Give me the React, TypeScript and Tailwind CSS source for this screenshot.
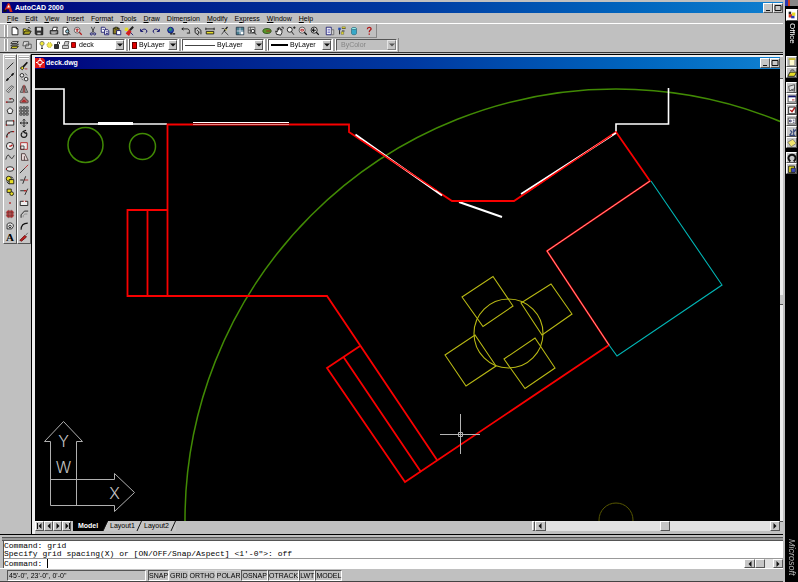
import { useState, type ReactNode } from "react";

type IconProps = { children: ReactNode };

function Icon({ children }: IconProps) {
  return (
    <svg viewBox="0 0 12 12" className="h-[10px] w-[10px] shrink-0" fill="none" stroke="#111" strokeWidth="1" aria-hidden="true">
      {children}
    </svg>
  );
}

type Tool = { name: string; icon: ReactNode };

const NAVY = "#10106a";
const RED = "#b01818";
const YELLOW = "#e6dc28";

const standardGroups: Tool[][] = [
  [
    { name: "New", icon: <path d="M2.5 1.5h5l2 2v7h-7zM7.5 1.5v2h2" fill="#fff" /> },
    {
      name: "Open",
      icon: (
        <>
          <path d="M1.5 10V3.5h3l1 1h3V6" fill={YELLOW} />
          <path d="M1.5 10l2-4h7.5l-2 4z" fill="#a8a020" />
          <path d="M7 2.5c1-1 2-1 3 .5" />
        </>
      ),
    },
    {
      name: "Save",
      icon: (
        <>
          <path d="M1.5 1.5h9v9h-8l-1-1z" fill="#333" />
          <path d="M3.5 2h5v3.5h-5z" fill="#ddd" stroke="none" />
          <path d="M4 8h4v2H4z" fill="#ccc" stroke="none" />
        </>
      ),
    },
  ],
  [
    {
      name: "Print",
      icon: (
        <>
          <path d="M4 5l1-3.5h5L9 5" fill="#fff" />
          <path d="M1.5 5.5h9v4h-9z" fill="#888" />
          <path d="M3 8.5h5" stroke="#eee" />
        </>
      ),
    },
    {
      name: "Print Preview",
      icon: (
        <>
          <path d="M2.5 1.5h4l2 2v7h-6z" fill="#fff" />
          <circle cx="7.5" cy="6.5" r="2" fill="#9cd" />
          <path d="M9 8l2 2.5" />
        </>
      ),
    },
    {
      name: "Find and Replace",
      icon: (
        <>
          <circle cx="5" cy="5" r="3.5" fill="#eee" stroke="#555" />
          <path d="M3 4h4M5 3v4M3.5 6h3" stroke={RED} />
          <path d="M7.5 7.5l3 3" stroke={RED} strokeWidth="1.5" />
        </>
      ),
    },
  ],
  [
    {
      name: "Cut",
      icon: (
        <>
          <path d="M4 1l3 7M8 1L5 8" stroke="#333" />
          <circle cx="4" cy="9.5" r="1.3" stroke={NAVY} />
          <circle cx="8" cy="9.5" r="1.3" stroke={NAVY} />
        </>
      ),
    },
    {
      name: "Copy",
      icon: (
        <>
          <path d="M1.5 1.5h4l1 1v5h-5z" fill="#fff" stroke={NAVY} />
          <path d="M5.5 4.5h4l1 1v5h-5z" fill="#fff" stroke={NAVY} />
          <path d="M7 7h2.5M7 9h2.5M3 4h2" stroke={NAVY} />
        </>
      ),
    },
    {
      name: "Paste",
      icon: (
        <>
          <path d="M1.5 2.5h7v7h-7z" fill="#8a7a20" />
          <path d="M3.5 1.5h3v2h-3z" fill={YELLOW} />
          <path d="M5.5 5.5h5v5h-5z" fill="#fff" stroke={NAVY} />
        </>
      ),
    },
    {
      name: "Match Properties",
      icon: (
        <>
          <path d="M11 1L7 5" stroke="#222" strokeWidth="2.5" />
          <path d="M6 4l3 3-3 5-4-3z" fill="#d22020" stroke="none" />
          <path d="M1 2h4v4H1z" fill={YELLOW} stroke="none" />
          <path d="M8 8l3 3" stroke={NAVY} />
        </>
      ),
    },
  ],
  [
    { name: "Undo", icon: <path d="M2 3.5v3h3M2.5 6c2-3 6-3 7 0 0 1-.5 2-1.5 2.500" stroke={NAVY} strokeWidth="1.2" /> },
    { name: "Redo", icon: <path d="M10 3.5v3H7M9.5 6c-2-3-6-3-7 0 0 1 .5 2 1.500 2.500" stroke={NAVY} strokeWidth="1.2" /> },
  ],
  [
    {
      name: "Insert Hyperlink",
      icon: (
        <>
          <circle cx="5.5" cy="5" r="3.5" fill="#2050b0" stroke={NAVY} />
          <path d="M3 4l3-2 1 3-3 1z" fill="#2a9a50" stroke="none" />
          <path d="M5 9.5h2.5M8 9.5h3" strokeWidth="1.5" />
        </>
      ),
    },
  ],
  [
    { name: "Tracking", icon: <path d="M1 3.5h7M3 2L1 3.5 3 5M8 3.5c3 1 2 3 2 4.500M7 8.5h4" /> },
    {
      name: "UCS",
      icon: (
        <>
          <path d="M2.500 2v6l4 3M2.500 4l3-2 4 3v5M5 5l2 2-1 3" />
          <path d="M7 8h4" stroke="#777" />
        </>
      ),
    },
    {
      name: "Distance",
      icon: (
        <>
          <path d="M1.5 6.5h9v3h-9z" fill={YELLOW} />
          <path d="M1 3.5h10M1 2v3M11 2v3" />
        </>
      ),
    },
  ],
  [
    {
      name: "Redraw All",
      icon: (
        <>
          <path d="M9 1L5 6" strokeWidth="1.5" />
          <path d="M2 3h3M5 6l5 5M2 10l3-4" stroke="#333" />
          <path d="M6 4l2 1" stroke={YELLOW} />
        </>
      ),
    },
  ],
  [
    {
      name: "Aerial View",
      icon: (
        <>
          <path d="M1.5 1.5h9v9h-9z" fill="#4a8090" stroke="#234" />
          <path d="M2 6h8M6 2v8" stroke="#dde" />
          <path d="M7 7h3v3H7z" fill="#fff" stroke="none" />
        </>
      ),
    },
    {
      name: "Named Views",
      icon: (
        <>
          <path d="M1.5 1.5h8v7h-8zM4 1.5v7M1.5 5h8" fill="#ddd" stroke="#444" />
          <circle cx="7" cy="6" r="2" fill="#fff" />
          <path d="M8.5 7.5L11 10.5" />
        </>
      ),
    },
  ],
  [
    {
      name: "3D Orbit",
      icon: (
        <>
          <ellipse cx="6" cy="6" rx="5" ry="3" fill="#58962a" stroke="#2b4a18" />
          <path d="M5 6h5" stroke={RED} />
        </>
      ),
    },
    { name: "Pan", icon: <path d="M3 10L2 6l2 1V3l1.500-1v3l1-3 1.500 1v2l1.500-1v4l-1.500 3zM9 1.5h2v2" fill="#eee" /> },
    {
      name: "Zoom Realtime",
      icon: (
        <>
          <circle cx="4.5" cy="4.5" r="3" fill="#eee" />
          <path d="M6.5 6.5l3 4M8.5 2h3M10 .5v3" />
        </>
      ),
    },
    {
      name: "Zoom Window",
      icon: (
        <>
          <circle cx="5" cy="5" r="3.7" fill="#eee" stroke="#444" />
          <path d="M3.5 4h3v2h-3z" stroke={RED} />
          <path d="M7.5 7.5l3 3" strokeWidth="1.5" />
        </>
      ),
    },
    {
      name: "Zoom Previous",
      icon: (
        <>
          <circle cx="5" cy="5" r="3.7" fill="#ddd" />
          <path d="M3 5h4M5 3L3 5l2 2M7.5 7.5l3 3" strokeWidth="1.3" />
        </>
      ),
    },
  ],
  [
    {
      name: "DesignCenter",
      icon: (
        <>
          <path d="M1.5 1.5h6v9h-6z" fill="#fff" stroke={NAVY} />
          <path d="M3 4h3M3 6h3M3 8h3" stroke="#55b" />
          <path d="M8 4.5h2.5v6H8z" fill="#ddd" stroke="#666" />
        </>
      ),
    },
    {
      name: "Properties",
      icon: (
        <>
          <path d="M1.5 2h3v3h-3z" fill="#2850b0" stroke="none" />
          <path d="M3 5v5M6 3h4M6 6h3" />
          <path d="M6 1h4v2H6zM5 7h3v3H5z" fill={YELLOW} stroke="#444" strokeWidth=".5" />
        </>
      ),
    },
    {
      name: "dbConnect",
      icon: (
        <>
          <path d="M3 3v6c0 2 6 2 6 0V3" fill="#38a8c8" stroke="#38788a" />
          <ellipse cx="6" cy="3" rx="3" ry="1.300" fill="#9ee" stroke="#38788a" />
        </>
      ),
    },
  ],
  [
    {
      name: "Help",
      icon: (
        <>
          <path d="M4 4c0-3 4.500-3 4.500-.5C8.5 5 6.300 5 6.300 7.500" stroke={RED} strokeWidth="1.6" />
          <path d="M5.5 9h1.600v1.600H5.500z" fill={RED} stroke="none" />
        </>
      ),
    },
  ],
];

const drawTools: Tool[] = [
  { name: "Line", icon: <path d="M2 10l8-8" /> },
  {
    name: "Construction Line",
    icon: (
      <>
        <path d="M1 11L11 1" />
        <path d="M2 10l2-2M8 4l2-2" strokeWidth="2" />
      </>
    ),
  },
  { name: "Multiline", icon: <path d="M1.5 8l6-6 3 1.500-6 7zM3 9.5l6-7" fill="#ddd" stroke="#555" /> },
  {
    name: "Polyline",
    icon: (
      <>
        <path d="M1.500 8.500h7c2.500 0 2.500-4 0-4H6" />
        <path d="M5 4.500h2M1 8.500h2" stroke={RED} strokeWidth="1.5" />
      </>
    ),
  },
  { name: "Polygon", icon: <path d="M6 2l3.500 3-1.500 4H4L2.500 5z" fill="#eee" /> },
  {
    name: "Rectangle",
    icon: (
      <>
        <path d="M1.500 3.500h9v5h-9z" fill="#eee" />
        <path d="M1 8.500h1.500M9.500 3.500h1.500" stroke={RED} strokeWidth="1.5" />
      </>
    ),
  },
  {
    name: "Arc",
    icon: (
      <>
        <path d="M2 10c0-4 3-7 8-7" strokeWidth="1.3" />
        <path d="M1.500 9.500h1.500M4 5h1.500M9 3h2" stroke={RED} strokeWidth="1.5" />
      </>
    ),
  },
  {
    name: "Circle",
    icon: (
      <>
        <circle cx="6" cy="6" r="4.3" fill="#eee" />
        <path d="M5 6h2l2-1.500" stroke={RED} strokeWidth="1.5" />
      </>
    ),
  },
  { name: "Spline", icon: <path d="M1 9c2-8 4-5 5-3s3 3 5-2" /> },
  {
    name: "Ellipse",
    icon: (
      <>
        <ellipse cx="6" cy="6" rx="4.500" ry="2.700" fill="#eee" />
        <path d="M1 6h1.500M9.500 6H11" stroke={RED} strokeWidth="1.5" />
      </>
    ),
  },
  {
    name: "Insert Block",
    icon: (
      <>
        <circle cx="4.500" cy="4.500" r="3" fill={YELLOW} />
        <path d="M5 5.500h5.500v5H5z" fill={YELLOW} />
        <path d="M2 8l3 3M7 2l3 2" />
      </>
    ),
  },
  {
    name: "Make Block",
    icon: (
      <>
        <path d="M2.500 2.500h5v4h-5z" fill={YELLOW} />
        <circle cx="8" cy="8" r="2.200" fill={YELLOW} />
      </>
    ),
  },
  { name: "Point", icon: <path d="M5 5h2v2H5z" fill={RED} stroke="none" /> },
  {
    name: "Hatch",
    icon: (
      <>
        <path d="M2.500 2.500h7v7h-7z" fill="#c86060" stroke={RED} />
        <path d="M1 4.500h10M1 7.500h10M4.500 1v10M7.500 1v10" stroke="#622" strokeWidth=".7" />
      </>
    ),
  },
  {
    name: "Region",
    icon: (
      <>
        <path d="M2.500 9.500V4l2-1.500c3-1 6 1 5.500 4l-2 3z" fill="#eee" />
        <circle cx="6" cy="6.500" r="1.500" />
      </>
    ),
  },
];

const modifyTools: Tool[] = [
  {
    name: "Erase",
    icon: (
      <>
        <path d="M10 1.500L5 7" strokeWidth="2" />
        <path d="M1.500 8.500l2.500-2 2 2-2 2z" fill={YELLOW} />
        <path d="M7 9.500h3" stroke={RED} />
      </>
    ),
  },
  {
    name: "Copy Object",
    icon: (
      <>
        <circle cx="3.500" cy="4" r="2.200" fill="#eee" />
        <circle cx="8.500" cy="8.500" r="2.200" fill="#eee" />
        <path d="M7 1.500l3 2.500M3 8l2 2" stroke="#555" />
      </>
    ),
  },
  {
    name: "Mirror",
    icon: (
      <>
        <path d="M5 2v8H1.500zM7 2v8h3.500z" fill="#aaa" stroke="#444" />
        <path d="M6 1v10" stroke={RED} />
      </>
    ),
  },
  {
    name: "Offset",
    icon: (
      <>
        <path d="M1.500 9.500c-1-3 2-4 2.500-4 0-4 4-4 4.500 0 3 0 3 3 2 4z" fill="#b07070" stroke="#444" />
        <path d="M4 8c0-2 4-2 4 0z" stroke={RED} />
      </>
    ),
  },
  {
    name: "Array",
    icon: <path d="M1 1h2.500v2.500H1zM4.800 1h2.500v2.500H4.800zM8.500 1H11v2.500H8.500zM1 4.800h2.500v2.500H1zM4.800 4.800h2.500v2.500H4.800zM8.500 4.800H11v2.500H8.500zM1 8.500h2.500V11H1zM4.800 8.500h2.500V11H4.800zM8.500 8.500H11V11H8.500z" strokeWidth=".8" />,
  },
  { name: "Move", icon: <path d="M6 1.500v9M1.500 6h9M4.500 3L6 1.500 7.500 3M4.500 9L6 10.500 7.500 9M3 4.500L1.500 6 3 7.500M9 4.500L10.500 6 9 7.500" /> },
  { name: "Rotate", icon: <path d="M4 4c-3 3-1 6 2 6s5-4 2-6M8.500 1.500L5 3l3 2.500" strokeWidth="1.4" /> },
  {
    name: "Scale",
    icon: (
      <>
        <path d="M2 2h8v8H2z" fill="#eee" stroke={RED} />
        <path d="M2 6h4v4H2z" stroke="#333" />
      </>
    ),
  },
  { name: "Stretch", icon: <path d="M3 2h4l4 8H3zM6.500 5v5" fill="#e8dada" stroke="#433" /> },
  {
    name: "Lengthen",
    icon: (
      <>
        <path d="M1 11l6-6" />
        <path d="M7 5l4-4" stroke={RED} />
      </>
    ),
  },
  {
    name: "Trim",
    icon: (
      <>
        <path d="M1.500 6h4M8 1.500L4.500 10.500" />
        <path d="M6.500 6h4.500" stroke={RED} />
      </>
    ),
  },
  {
    name: "Extend",
    icon: (
      <>
        <path d="M1.500 4.500h5M10.500 2L7 9.500" />
        <path d="M6 4.500h3" stroke={RED} strokeWidth="1.5" />
      </>
    ),
  },
  {
    name: "Break",
    icon: (
      <>
        <path d="M5 4H1.500v5h9V4H8" fill="#eee" />
        <path d="M4.500 4h1M7.500 4h1" stroke={RED} strokeWidth="1.5" />
      </>
    ),
  },
  {
    name: "Chamfer",
    icon: (
      <>
        <path d="M2.500 10.500V7l4-4.500h4.500" />
        <path d="M5 10V8l2-2h3" stroke="#888" />
      </>
    ),
  },
  { name: "Fillet", icon: <path d="M2.500 10.500C2.500 5 5 2.500 10.500 2.500" strokeWidth="1.3" /> },
  {
    name: "Explode",
    icon: (
      <>
        <path d="M1 10l6-6 2 2-6 5z" fill="#c02020" stroke="#611" />
        <path d="M8 4l2.500-3" stroke="#555" />
      </>
    ),
  },
];

const officeGroups: Tool[][] = [
  [
    {
      name: "New Office Document",
      icon: (
        <>
          <path d="M2.500 2.500h7v8h-7z" fill="#fffbd0" stroke="#777" />
          <path d="M2 2.500h8" stroke="#c8b820" strokeWidth="2" />
        </>
      ),
    },
    {
      name: "Open Office Document",
      icon: (
        <>
          <path d="M1 10L3.500 5h8L9 10z" fill={YELLOW} />
          <path d="M4 3.500c2-2 4-1 5 0" />
        </>
      ),
    },
  ],
  [
    { name: "New Message", icon: <path d="M2 4l7-2v5L3 9.500zM5 8l4 2V5" fill="#ddd" stroke="#444" /> },
    {
      name: "New Appointment",
      icon: (
        <>
          <path d="M1.500 2.500h9v7h-9z" fill="#fff" stroke="#555" />
          <path d="M1.500 3h9" stroke={NAVY} strokeWidth="2" />
          <path d="M6 6h3v2H6z" fill="#d08080" stroke="none" />
        </>
      ),
    },
    {
      name: "New Task",
      icon: (
        <>
          <path d="M2 2.500h8v8H2z" fill="#fff" />
          <path d="M4 6l2 2 3.500-5" stroke={RED} strokeWidth="1.6" />
        </>
      ),
    },
    {
      name: "New Contact",
      icon: (
        <>
          <path d="M1.500 2.500h9v7h-9z" fill="#fff" stroke="#444" />
          <path d="M3 5h2v2H3zM7 5h2M7 7.500h2" stroke="#225" />
        </>
      ),
    },
    { name: "New Journal Entry", icon: <path d="M3 10l3-4-2-2M8 2v8M8 6l3-3M3 10h7" stroke="#347" strokeWidth="1.3" /> },
    { name: "New Note", icon: <path d="M1 5l6-3.500 4 5L5 10.500z" fill="#f2e670" stroke="#776" /> },
  ],
  [
    { name: "Find Fast", icon: <path d="M4 10C0 7 2 2 6 2s6 5 2 8" strokeWidth="2.4" /> },
    {
      name: "Binder",
      icon: (
        <>
          <path d="M2 2.500h7v8H2z" fill={YELLOW} />
          <path d="M5 5h5v5H5z" fill="#3a4ac0" stroke="#222" />
        </>
      ),
    },
  ],
];

// label and index of its mnemonic letter
const menus: [string, number][] = [
  ["File", 0],
  ["Edit", 0],
  ["View", 0],
  ["Insert", 0],
  ["Format", 1],
  ["Tools", 0],
  ["Draw", 0],
  ["Dimension", 4],
  ["Modify", 0],
  ["Express", 1],
  ["Window", 0],
  ["Help", 0],
];

const raised = "border border-t-white border-l-white border-r-[#555] border-b-[#555] bg-[#c6c6c6]";
const sunken = "border border-t-[#555] border-l-[#555] border-r-white border-b-white";
const flat = "border border-[#d2d2d2]";

function ToolButton({ tool }: { tool: Tool }) {
  return (
    <button title={tool.name} aria-label={tool.name} className="flex h-3 w-3 items-center justify-center">
      <Icon>{tool.icon}</Icon>
    </button>
  );
}

function Handle() {
  return <span className="h-3 w-1 shrink-0 border-x border-white bg-[#a0a0a0]" />;
}

function WindowButton({ label, children }: { label: string; children: ReactNode }) {
  return (
    <button aria-label={label} className={`flex h-[10px] w-[10px] items-center justify-center ${raised}`}>
      <svg viewBox="0 0 8 8" className="h-2 w-2 shrink-0" fill="none" stroke="#111">
        {children}
      </svg>
    </button>
  );
}

function Arrow({ dir, bar }: { dir: "left" | "right" | "down"; bar?: boolean }) {
  const d = { left: "M5.500 1v6l-3-3z", right: "M2.500 1v6l3-3z", down: "M1 2.500h6l-3 3z" }[dir];
  return (
    <svg viewBox="0 0 8 8" className="h-2 w-2 shrink-0" aria-hidden="true">
      <path d={d} fill="#111" />
      {bar && <path d={dir === "left" ? "M1 1h1v6H1z" : "M6 1h1v6H6z"} fill="#111" />}
    </svg>
  );
}

type ComboProps = {
  label: string;
  options: string[];
  className: string;
  disabled?: boolean;
  children?: ReactNode;
};

function Combo({ label, options, className, disabled, children }: ComboProps) {
  return (
    <div className={`flex h-3 items-center pl-[2px] ${sunken} ${disabled ? "bg-[#c0c0c0] text-[#858585]" : "bg-white"} ${className}`}>
      {children}
      <div className="relative flex min-w-0 flex-1 items-center self-stretch">
        <select
          aria-label={label}
          disabled={disabled}
          className="h-full w-full appearance-none bg-transparent pl-[2px] leading-[10px] outline-none disabled:opacity-100"
        >
          {options.map((o) => (
            <option key={o}>{o}</option>
          ))}
        </select>
        <span className={`pointer-events-none absolute right-0 flex h-[10px] w-[9px] items-center justify-center ${raised} ${disabled ? "opacity-60" : ""}`}>
          <Arrow dir="down" />
        </span>
      </div>
    </div>
  );
}

function Drawing() {
  return (
    <svg
      viewBox="35 69 745 452"
      preserveAspectRatio="xMinYMin slice"
      className="block min-h-0 w-full flex-1 bg-black"
      fill="none"
      role="img"
      aria-label="deck.dwg"
    >
      {/* trees */}
      <g stroke="#418a04" strokeWidth="1.5">
        <circle cx="616" cy="520" r="431" />
        <circle cx="85.500" cy="145" r="17.500" />
        <circle cx="142.500" cy="146.500" r="13" />
      </g>
      <circle cx="616" cy="520" r="17" stroke="#565600" />

      {/* house walls and windows */}
      <g stroke="#fff" strokeWidth="2">
        <path d="M35 89H64V124H133" strokeWidth="1.6" />
        <path d="M133 124H167" stroke="#b8b8b8" />
        <path d="M98 123.500H133" strokeWidth="3" />
        <path d="M616 132V124H668.500V88" strokeWidth="1.6" />
        <path d="M459 202L502 217" />
      </g>

      {/* deck outline */}
      <g stroke="#f80000" strokeWidth="1.8">
        <path d="M167.500 296V124.500H349V132L452 201H514L616 132L650 181L547 251L609 345L405 482L327 368L360 346" />
        <path d="M167 210H127.500V296H327L437 460" />
        <path d="M147.500 210V296M343.500 357L421 472" />
      </g>
      <path d="M193 122.500H289" stroke="#fff" />
      <path d="M193 124.500H289" stroke="#f08080" />
      <path d="M355.500 134.500L442 195.500M521 194L616 133" stroke="#fff" strokeWidth="1.6" />
      <path d="M361 140L436 190M526 193L612 135" stroke="#f80000" strokeWidth="1.2" />

      {/* hot tub */}
      <path d="M650 181L547 251L609 345" stroke="#ffb4b4" strokeWidth=".8" />
      <path d="M651 181L722 285L617 356L609 345" stroke="#00b4b4" strokeWidth="1.1" />

      {/* table and chairs */}
      <g stroke="#b8b814" strokeWidth="1.1">
        <circle cx="508.500" cy="333.500" r="34.500" />
        <path d="M462 297L493 276.500L513 306L483 326.500Z" />
        <path d="M521 303L551 284L572 314L542 335Z" />
        <path d="M445 355L475 335L496 366L466 386Z" />
        <path d="M504 359L535 338L555 368L525 388.500Z" />
      </g>

      {/* ucs marker */}
      <g stroke="#b0b0b0">
        <path d="M50.500 505.500V441.500H44.500L63.500 421.500L82.500 441.500H76.500V505.500" />
        <path d="M50.500 479.500H114.500V473.500L134.500 492.500L114.500 511.500V505.500H50.500" />
      </g>
      <g fill="#c4c4c4" textAnchor="middle" className="font-['Inter',sans-serif] text-[16px] font-light">
        <text x="63.500" y="447">Y</text>
        <text x="63.500" y="473">W</text>
        <text x="114.500" y="499">X</text>
      </g>

      {/* cursor */}
      <path d="M440 434.500H480M460.500 414V454" stroke="#b4b4b4" />
      <path d="M458.500 432.500h4v4h-4z" stroke="#b4b4b4" />
    </svg>
  );
}

function LayoutTabs() {
  const [tab, setTab] = useState("Model");

  return (
    <div className="flex h-[10px] items-stretch bg-[#c0c0c0]">
      <div className="flex">
        <button aria-label="First layout" className={`flex w-[9px] items-center justify-center ${raised}`}><Arrow dir="left" bar /></button>
        <button aria-label="Previous layout" className={`flex w-[9px] items-center justify-center ${raised}`}><Arrow dir="left" /></button>
        <button aria-label="Next layout" className={`flex w-[9px] items-center justify-center ${raised}`}><Arrow dir="right" /></button>
        <button aria-label="Last layout" className={`flex w-[9px] items-center justify-center ${raised}`}><Arrow dir="right" bar /></button>
      </div>
      <div className="flex pl-[2px]">
        {["Model", "Layout1", "Layout2"].map((name) => (
          <button
            key={name}
            onClick={() => setTab(name)}
            className={`flex items-center leading-[10px] ${tab === name ? "bg-black pl-[3px] font-bold text-white" : "bg-[#c6c6c6] pl-[2px]"}`}
          >
            <span className="w-6">{name}</span>
            <svg viewBox="0 0 8 10" className="h-[10px] w-2" aria-hidden="true">
              <path d="M8 0L3 10H8z" fill="#c6c6c6" />
              <path d="M7.500 0L3 10" stroke="#111" />
            </svg>
          </button>
        ))}
      </div>
      <div className="ml-auto flex w-1/3 items-stretch bg-[#e2e2e2]">
        <span className={`w-[3px] ${raised}`} />
        <button aria-label="Scroll left" className={`flex w-[11px] items-center justify-center ${raised}`}><Arrow dir="left" /></button>
        <span className={`ml-auto w-[10px] ${raised}`} />
        <span className="w-[100px]" />
        <button aria-label="Scroll right" className={`flex w-[10px] items-center justify-center ${raised}`}><Arrow dir="right" /></button>
      </div>
    </div>
  );
}

function OfficeBar() {
  return (
    <aside className="flex w-[15px] shrink-0 flex-col items-center border-l-2 border-[#c0c0c0] bg-black text-white">
      <div className="flex h-[6px] w-full bg-[#888]">
        <span className="w-[3px] bg-[#2838b0]" />
        <span className="w-[2px] bg-[#d04020]" />
      </div>
      <button aria-label="Office" className={`mt-[3px] flex h-3 w-3 shrink-0 items-center justify-center ${raised} bg-white`}>
        <Icon>
          <path d="M2 5h4v4H2z" fill="#d03820" stroke="none" />
          <path d="M6 3h4v4H6z" fill={YELLOW} stroke="none" />
          <path d="M5 7h4v3H5z" fill="#2838b0" stroke="none" />
          <path d="M2 2h3v3H2z" fill="#222" stroke="none" />
        </Icon>
      </button>
      <span className="h-[35px] pt-[2px] text-[8px] leading-3 [writing-mode:vertical-rl]">Office</span>
      <div className="flex flex-col gap-1">
        {officeGroups.map((group, i) => (
          <div key={i} className="flex flex-col">
            {group.map((tool) => (
              <button
                key={tool.name}
                title={tool.name}
                aria-label={tool.name}
                className={`flex h-[11px] w-[11px] items-center justify-center ${raised}`}
              >
                <Icon>{tool.icon}</Icon>
              </button>
            ))}
          </div>
        ))}
      </div>
      <span className="mt-auto pb-[6px] text-[9px] leading-3 text-[#b8b8b8] italic [writing-mode:vertical-rl]">Microsoft</span>
    </aside>
  );
}

export default function App() {
  const [command, setCommand] = useState("");

  const modes = [
    { name: "SNAP", on: true },
    { name: "GRID", on: false },
    { name: "ORTHO", on: false },
    { name: "POLAR", on: false },
    { name: "OSNAP", on: true },
    { name: "OTRACK", on: true },
    { name: "LWT", on: true },
    { name: "MODEL", on: true },
  ];

  return (
    <div className="flex h-screen bg-[#c0c0c0] font-['Liberation_Sans',sans-serif] text-[7px] leading-[10px] text-black">
      <div className="flex min-w-0 flex-1 flex-col border-b border-[#444]">
        <header className="mt-[2px] ml-[2px] flex h-[11px] items-center bg-linear-to-r from-[#00007c] via-[#0038a0] to-[#1080d0] text-white">
          <svg viewBox="0 0 12 12" className="h-[11px] w-3" aria-hidden="true">
            <path d="M1 11L6 1l2 1 3 9H8L7 8H4l-1 3z" fill="#d82818" />
            <path d="M5 6l2-3 1 3z" fill="#fff" />
            <path d="M1 8l4 1-1 2H1z" fill="#111" />
          </svg>
          <h1 className="pl-px font-bold">AutoCAD 2000</h1>
          <div className="ml-auto flex">
            <WindowButton label="Minimize"><path d="M2 6.500h4" /></WindowButton>
            <WindowButton label="Maximize"><path d="M1 1.500h6v5H1z" /></WindowButton>
          </div>
        </header>

        <nav className="flex h-[10px] items-center gap-[7px] pl-[7px]">
          {menus.map(([name, key]) => (
            <button key={name} className="leading-[9px]">
              {name.slice(0, key)}
              <u>{name[key]}</u>
              {name.slice(key + 1)}
            </button>
          ))}
        </nav>

        <div className="flex border-t border-white">
          <div className="flex h-[14px] items-center gap-[3px] border-r border-b border-[#888] pr-px pl-1">
            <div className="flex items-center">
              <Handle />
              <div className="flex pl-px">
                {standardGroups[0].map((tool) => <ToolButton key={tool.name} tool={tool} />)}
              </div>
            </div>
            {standardGroups.slice(1).map((group, i) => (
              <div key={i} className="flex">
                {group.map((tool) => <ToolButton key={tool.name} tool={tool} />)}
              </div>
            ))}
          </div>
        </div>

        <div className="flex border-b border-[#333]">
          <div className="flex h-[14px] items-center border-r border-[#888] pr-px pl-1">
            <Handle />
            <div className="flex pr-[3px] pl-px">
              <ToolButton
                tool={{
                  name: "Make Object's Layer Current",
                  icon: (
                    <>
                      <path d="M1 4l2-2h7L8 4zM1 7l2-2h7L8 7z" fill="#eee" />
                      <path d="M1 10l2-2.500h7L8 10z" fill={YELLOW} />
                    </>
                  ),
                }}
              />
              <ToolButton
                tool={{
                  name: "Layers",
                  icon: <path d="M1 7l1-5h6v5zM4 10l1-5h6v5z" fill="#ddd" stroke="#444" />,
                }}
              />
            </div>
            <Combo label="Layer" options={["deck"]} className="w-[89px]">
              <svg viewBox="0 0 38 10" className="h-[10px] w-[38px] shrink-0" fill="none" stroke="#222" strokeWidth=".9" aria-hidden="true">
                <circle cx="3" cy="3.500" r="2.100" fill="#f0e838" stroke="#776" />
                <path d="M2 7h2M2 8.500h2" />
                <circle cx="10.500" cy="5" r="2.500" fill="#f4ec50" stroke="#998818" strokeDasharray="1 1" />
                <path d="M15.500 4.500h4v4h-4z" fill="#333" />
                <path d="M18.500 4V2h2v2" />
                <path d="M23.500 5.500h6v3h-6zM25 5l1-3.500h4L29 5" fill="#ccc" stroke="#555" />
                <path d="M32.500 2.500h4v5h-4z" fill="#e00000" stroke="#600" />
              </svg>
            </Combo>
            <Handle />
            <Combo label="Color" options={["ByLayer"]} className="w-[49px]">
              <span className="h-[7px] w-[5px] shrink-0 border border-[#600] bg-[#e00000]" />
            </Combo>
            <Handle />
            <Combo label="Linetype" options={["ByLayer"]} className="w-[82px]">
              <span className="h-px w-[30px] shrink-0 bg-[#444]" />
            </Combo>
            <Handle />
            <Combo label="Lineweight" options={["ByLayer"]} className="w-[64px]">
              <span className="h-[2px] w-[17px] shrink-0 bg-black" />
            </Combo>
            <Handle />
            <Combo label="Plot style" options={["ByColor"]} className="w-[61px]" disabled />
          </div>
        </div>

        <main className="mt-px flex min-h-0 flex-1">
          <div className="flex w-[31px] shrink-0 items-start pl-[3px]">
            {[drawTools, modifyTools].map((tools, i) => (
              <div key={i} className={`flex h-[190px] w-[14px] flex-col items-center ${raised}`}>
                <span className="my-px h-[3px] w-[10px] shrink-0 border-y border-white bg-[#a0a0a0]" />
                {tools.map((tool) => (
                  <div key={tool.name} className="flex min-h-0 flex-1 items-center">
                    <ToolButton tool={tool} />
                  </div>
                ))}
                {i === 0 && (
                  <button aria-label="Multiline Text" className="min-h-0 flex-1 font-['Liberation_Serif',serif] text-[11px] leading-[11px] font-bold">
                    A
                  </button>
                )}
              </div>
            ))}
          </div>

          <section className="flex min-w-0 flex-1 flex-col border-t border-l border-black">
            <div className="flex min-h-0 flex-1 flex-col border-t-2 border-l-[3px] border-[#f0f0f0] pb-[3px]">
              <div className="mr-[3px] flex h-3 items-center bg-linear-to-r from-[#00007c] via-[#0038a0] to-[#1080d0] text-white">
                <svg viewBox="0 0 10 10" className="h-[10px] w-[10px]" aria-hidden="true">
                  <path d="M0 0h8l2 2v8H0z" fill="#e01818" />
                  <circle cx="5" cy="4.500" r="2.300" fill="none" stroke="#fff" />
                  <path d="M5 0v2.500M5 6.500V9M1 4.500h1.500M7.500 4.500H9" stroke="#fff" />
                </svg>
                <h2 className="pl-px font-bold">deck.dwg</h2>
                <div className="ml-auto flex">
                  <WindowButton label="Minimize drawing"><path d="M2 6.500h4" /></WindowButton>
                  <WindowButton label="Restore drawing"><path d="M1 1.500h6v5H1z" /></WindowButton>
                </div>
              </div>
              <div className="flex min-h-0 flex-1">
                <div className="flex min-w-0 flex-1 flex-col">
                  <Drawing />
                  <LayoutTabs />
                </div>
                <div className="flex w-[3px] shrink-0 flex-col bg-[#ececec]">
                  <span className="h-[10px] border-b border-[#555] bg-[#c6c6c6]" />
                  <span className="my-auto h-[10px] border-b border-[#555] bg-[#c6c6c6]" />
                  <span className="h-[10px] border-t border-[#555] bg-[#c6c6c6]" />
                </div>
              </div>
            </div>
          </section>
        </main>

        <div className="h-[7px] border-t border-black bg-[#c0c0c0]">
          <div className="mt-[2px] ml-[2px] h-[4px] border-y border-[#555] bg-[#999]" />
        </div>

        <section className="ml-[3px] border-l border-[#555] bg-white font-['Liberation_Mono',monospace] text-[8px] leading-[8px]">
          <div className="pt-px">
            <p>Command: grid</p>
            <p>Specify grid spacing(X) or [ON/OFF/Snap/Aspect] &lt;1'-0"&gt;: off</p>
          </div>
          <div className="flex h-[10px] items-stretch border-t border-[#999]">
            <label htmlFor="command" className="self-center whitespace-pre">Command: </label>
            <input
              id="command"
              autoFocus
              value={command}
              onChange={(e) => setCommand(e.target.value)}
              className="min-w-0 flex-1 self-center border-l border-black leading-[8px] caret-transparent outline-none"
            />
            <div className="flex w-[39px] bg-[#e2e2e2]">
              <button aria-label="Scroll command left" className={`flex w-[11px] items-center justify-center ${raised}`}><Arrow dir="left" /></button>
              <span className={`w-[10px] ${raised}`} />
              <button aria-label="Scroll command right" className={`ml-auto flex w-[10px] items-center justify-center ${raised}`}><Arrow dir="right" /></button>
            </div>
          </div>
        </section>

        <footer className="flex h-[13px] items-center border-t border-white pl-[7px]">
          <span className={`mr-[2px] w-[139px] pl-px leading-[9px] ${sunken}`}>45'-0", 23'-0", 0'-0"</span>
          {modes.map((m) => (
            <button key={m.name} className={`leading-[9px] ${m.on ? sunken : flat}`}>
              {m.name}
            </button>
          ))}
        </footer>
      </div>

      <OfficeBar />
    </div>
  );
}
